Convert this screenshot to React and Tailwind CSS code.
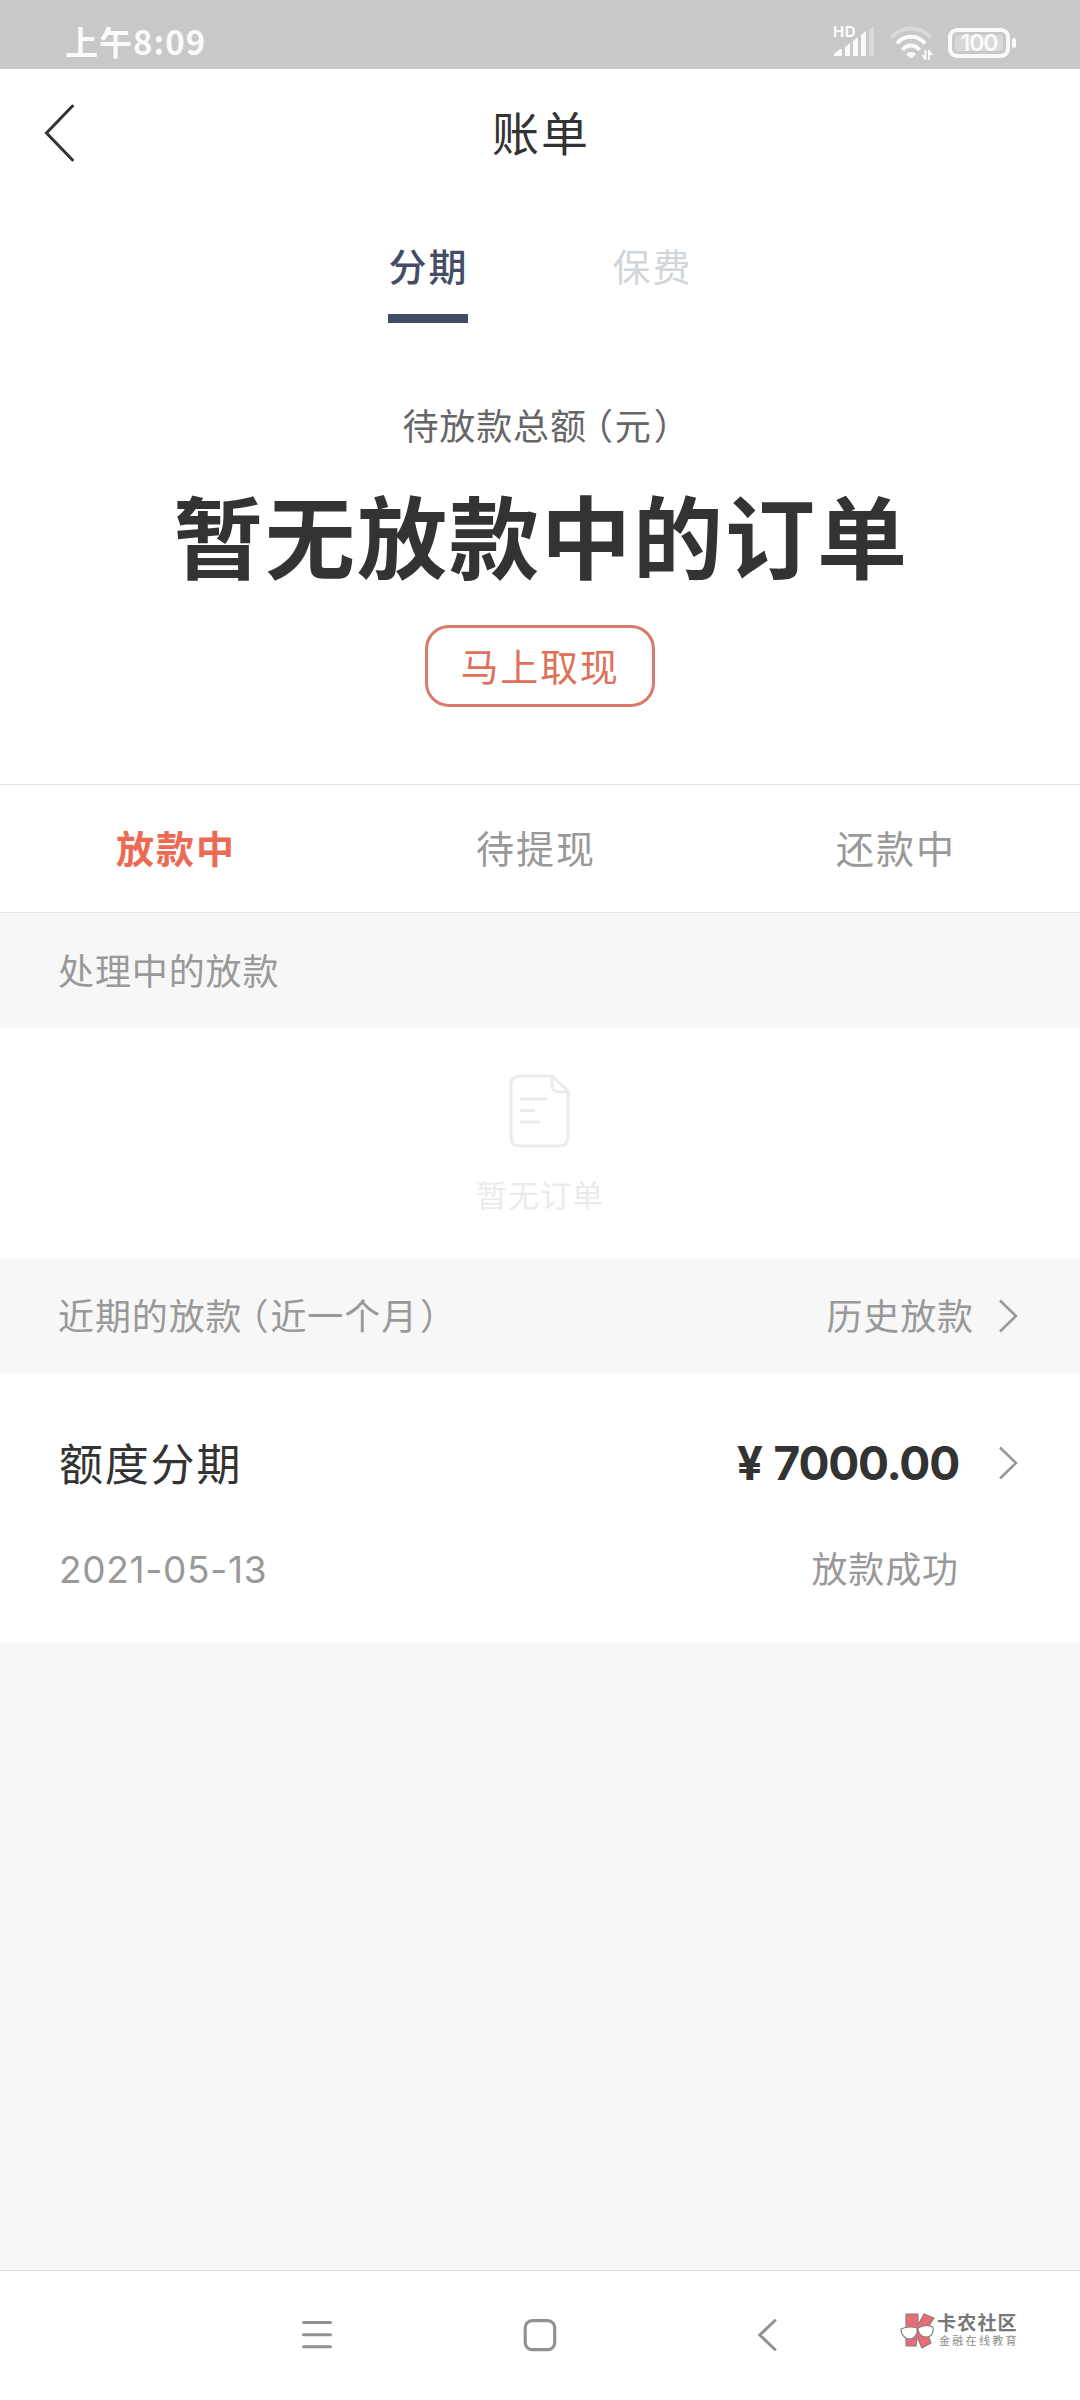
import React, { useState } from 'react';

const Chevron = () => (
  <svg className="h-9 w-[22px]" viewBox="0 0 22 36" fill="none" stroke="#999" strokeWidth="2.6">
    <path d="M2 2.5 L18 18 L2 33.5" />
  </svg>
);

// Full-width brackets set tighter than their normal cell
const Bracketed = ({ children }) => (
  <>
    <span className="ml-[8px] mr-px [font-feature-settings:'halt']">（</span>
    {children}
    <span className="ml-[2px] mr-[5px] [font-feature-settings:'halt']">）</span>
  </>
);

const StatusBar = () => (
  <div className="flex h-[69px] shrink-0 items-start justify-between bg-[#c8c8c8] pl-[65px] pr-[64px] text-[#fafafa]">
    <span className="mt-[21px] font-['Noto_Sans_CJK_SC',sans-serif] text-[33px] leading-10 font-bold tracking-[1px]">上午8:09</span>
    <div className="mt-[22px] flex gap-[15px]">
      {/* Signal */}
      <div className="relative h-10 w-[42px]">
        <span className="absolute top-[4px] left-0 text-[15px] leading-[12px] font-bold tracking-[0.5px]">HD</span>
        <svg className="h-10 w-[42px]" viewBox="0 0 42 40" fill="#fafafa">
          <path d="M1 34 V32 L7 27 H9 V34Z" />
          <path d="M12 34 V25 L17 21 V34Z" />
          <path d="M20 34 V19 L25 15 V34Z" />
          <path d="M28 34 V13 L33 9 V34Z" />
          <path d="M36 34 V8 L41 4 V34Z" opacity="0.35" />
        </svg>
      </div>
      {/* Wifi */}
      <svg className="h-10 w-[43px]" viewBox="0 0 43 40" fill="none" stroke="#fafafa" strokeWidth="4">
        <path d="M1.5 15.5 C12 3.5 30 3.5 40.5 15.5" opacity="0.35" />
        <path d="M7 21.5 C14 12.5 28 12.5 35 21.5" />
        <path d="M12.5 28 C17 22 25 22 29.5 28" />
        <path d="M16.5 31.5 C18.5 29.5 23.5 29.5 25.5 31.5 V33 L21 36.5 L16.5 33Z" fill="#fafafa" stroke="none" />
        <path d="M35.5 28 V38 M32.5 33 L35.5 37 M39 38 V28 M42 33 L39 29" strokeWidth="2" />
      </svg>
      {/* Battery */}
      <div className="-mt-[6px] flex h-[53px] items-center gap-[2px]">
        <div className="h-[30px] w-[62px] rounded-[9px] border-4 border-[#fafafa] p-[3px]">
          <div className="flex h-4 items-center justify-center rounded-[3px] bg-[#d8d8d8] text-[23px] leading-4 font-semibold tracking-[-1px]">100</div>
        </div>
        <div className="h-[10px] w-1 rounded-sm bg-[#fafafa]"></div>
      </div>
    </div>
  </div>
);

const BrandMark = () => (
  <div className="flex items-center gap-[2px]">
    <svg className="h-9 w-[35px]" viewBox="0 0 35 36" stroke="#8b7f80" strokeWidth="1.2">
      <path d="M6 1 L18 1 L18 12 L24 1 L34 5 L26 17 L31 30 L22 35 L17 24 L16 33 L6 33Z" fill="#ec6b79" />
      <path d="M1 16 C5 14 12 13 17 15 C18 20 15 26 10 26 C4 26 1 21 1 16Z" fill="#fff" />
      <path d="M18 15 C23 12 29 12 33 14 C34 19 32 24 26 24 C21 24 18 20 18 15Z" fill="#fff" />
    </svg>
    <div className="flex flex-col pt-[2px]">
      <span className="text-[19px] leading-5 font-bold tracking-[1.2px] text-[#777]">卡农社区</span>
      <span className="pl-[2px] text-[11px] leading-[15px] tracking-[2.3px] text-[#8c8c8c]">金融在线教育</span>
    </div>
  </div>
);

const App = () => {
  const [activeType, setActiveType] = useState('分期');
  const [activeStatus, setActiveStatus] = useState('放款中');

  const types = ['分期', '保费'];
  const statuses = ['放款中', '待提现', '还款中'];

  return (
    <div className="flex h-[2400px] w-[1080px] flex-col overflow-hidden bg-[#f7f7f7] font-[Inter,'Noto_Sans_CJK_SC',sans-serif] whitespace-nowrap text-[#333]">
      <StatusBar />

      {/* Header */}
      <div className="flex h-[130px] shrink-0 items-center bg-white pl-11">
        <svg className="mb-[2px] h-[60px] w-8" viewBox="0 0 32 60" fill="none" stroke="#333" strokeWidth="3" strokeLinecap="round">
          <path d="M28.5 3 L2.5 30 L28.5 57" />
        </svg>
        <h1 className="mr-[74px] flex-1 text-center text-[47px] leading-[60px] tracking-[2px]">账单</h1>
      </div>

      {/* Summary */}
      <div className="flex h-[585px] shrink-0 flex-col items-center bg-white">
        <div className="flex gap-36 pt-[38px]">
          {types.map((type) => (
            <button
              key={type}
              onClick={() => setActiveType(type)}
              className={`flex w-20 flex-col items-center text-[38px] leading-[60px] tracking-[2px] ${activeType === type ? 'font-medium text-[#454d66]' : 'text-[#d1d6db]'}`}
            >
              <span className="pl-px">{type}</span>
              <span className={`mt-[17px] h-[9px] w-20 ${activeType === type ? 'bg-[#454d66]' : 'bg-transparent'}`}></span>
            </button>
          ))}
        </div>
        <p className="mt-[84px] text-[36px] leading-10 tracking-[0.9px] text-[#666]">
          待放款总额<Bracketed>元</Bracketed>
        </p>
        <h2 className="mt-[43px] pl-[2px] text-[90px] leading-[100px] font-bold tracking-[2px]">暂无放款中的订单</h2>
        <button className="mt-[35px] h-[82px] w-[230px] rounded-[24px] border-[3px] border-[#d9796a] pt-px text-[38px] leading-[76px] tracking-[1.8px] text-[#e0705a]">
          马上取现
        </button>
      </div>

      {/* Status tabs */}
      <div className="grid h-[129px] shrink-0 grid-cols-3 border-y border-[#e6e6e6] bg-white">
        {statuses.map((status) => (
          <button
            key={status}
            onClick={() => setActiveStatus(status)}
            className={`pt-[2px] pr-2 text-[38px] tracking-[2px] ${activeStatus === status ? 'font-bold text-[#ec6a53]' : 'text-[#999]'}`}
          >
            {status}
          </button>
        ))}
      </div>

      {/* Processing */}
      <div className="flex h-[115px] shrink-0 items-center pt-[2px] pl-[58px] text-[36px] tracking-[0.9px] text-[#999]">处理中的放款</div>
      <div className="flex h-[230px] shrink-0 flex-col items-center bg-white pt-[45px] text-[#ebebeb]">
        <svg className="h-[76px] w-16" viewBox="0 0 64 76" fill="none" stroke="currentColor" strokeWidth="3">
          <path d="M44 3 H12 Q3 3 3 12 V64 Q3 73 12 73 H51 Q60 73 60 64 V18Z" strokeLinejoin="round" />
          <path d="M44 3 V12 Q44 19 51 19 H60" />
          <path d="M12 26 H39 M12 37.5 H27 M12 49 H32" />
        </svg>
        <p className="mt-[26px] text-[31px] leading-[42px] tracking-[1px]">暂无订单</p>
      </div>

      {/* Recent */}
      <div className="flex h-[115px] shrink-0 items-center justify-between pr-[60px] pl-[58px] text-[36px] tracking-[0.9px] text-[#999]">
        <span className="pt-[2px]">
          近期的放款<Bracketed>近一个月</Bracketed>
        </span>
        <button className="flex items-center gap-6">
          <span className="pt-[2px]">历史放款</span>
          <Chevron />
        </button>
      </div>
      <div className="h-[269px] shrink-0 bg-white pr-[60px] pl-[59px]">
        <div className="flex items-start justify-between pt-[60px] leading-[60px]">
          <span className="pt-[2px] text-[44px] tracking-[1.8px]">额度分期</span>
          <div className="flex items-center">
            <span className="mr-[39px] text-[46px] font-bold tracking-[-1.2px]">
              ¥<span className="ml-[2px]"> 7000.00</span>
            </span>
            <Chevron />
          </div>
        </div>
        <div className="mt-[44px] flex items-center justify-between pr-[61px] leading-[60px] text-[#999]">
          <span className="text-[37px] tracking-[0.7px]">2021-05-13</span>
          <span className="pt-px text-[36px] tracking-[0.9px]">放款成功</span>
        </div>
      </div>

      {/* System navigation */}
      <div className="mt-auto flex h-[130px] shrink-0 items-start border-t border-[#e0e0e0] bg-white pt-[46px] pl-[300px]">
        <svg className="h-9 w-[34px]" viewBox="0 0 34 36" fill="none" stroke="#919191" strokeWidth="3" strokeLinecap="round">
          <path d="M3.5 5.5 H30.5 M3.5 17.7 H30.5 M3.5 29.8 H30.5" />
        </svg>
        <svg className="ml-[188px] h-9 w-9" viewBox="0 0 36 36" fill="none" stroke="#919191" strokeWidth="3.2">
          <rect x="3.2" y="3.6" width="29.5" height="29" rx="7" />
        </svg>
        <svg className="ml-[198px] h-9 w-6" viewBox="0 0 24 36" fill="none" stroke="#919191" strokeWidth="3" strokeLinecap="round">
          <path d="M19 3.5 L3.8 18 L19 32.5" />
        </svg>
        <div className="-mt-[5px] ml-[120px]">
          <BrandMark />
        </div>
      </div>
    </div>
  );
};

export default App;
